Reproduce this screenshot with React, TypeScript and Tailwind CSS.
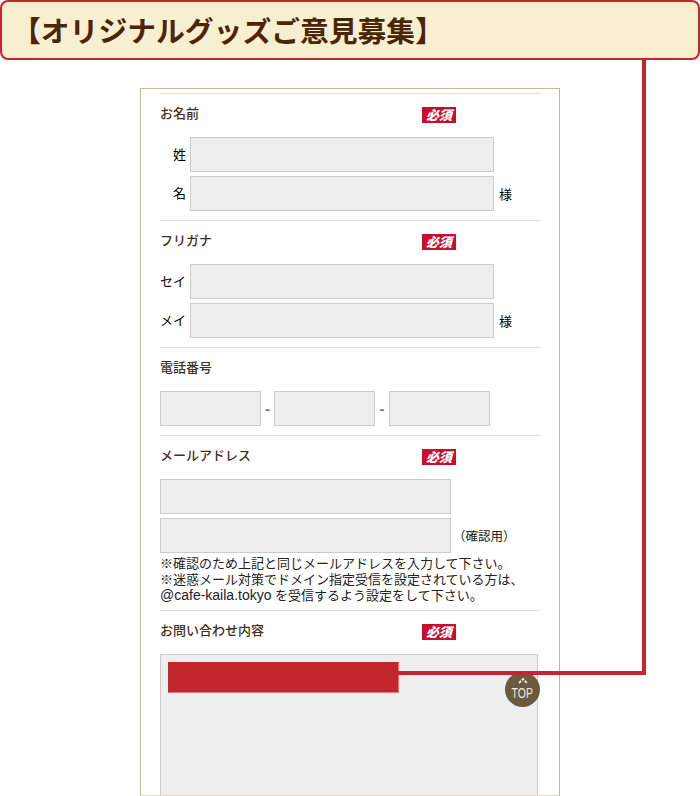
const sans = "font-['Liberation_Sans','Noto_Sans_CJK_JP',sans-serif]";

function Badge() {
  return (
    <span className="flex h-4 w-[34px] items-center justify-center bg-[#c8102e] text-[13px] leading-none font-black text-white italic">
      必須
    </span>
  );
}

function Heading({ label, required }: { label: string; required?: boolean }) {
  return (
    <div className="mb-[5px] flex h-[38px] items-center">
      <div className="w-[262px] text-[13px] leading-none font-medium text-[#3f3124]">{label}</div>
      {required && <div className="mt-1"><Badge /></div>}
    </div>
  );
}

function Field({ className }: { className: string }) {
  return <div className={`h-[35px] border border-[#cccccc] bg-[#eeeeee] ${className}`} />;
}

function NameRow({ label, suffix, right }: { label: string; suffix?: boolean; right?: boolean }) {
  return (
    <div className="flex items-center">
      <div className={`w-[30px] pr-1 text-[13px] leading-none text-black ${right ? "text-right" : ""}`}>{label}</div>
      <Field className="w-[304px]" />
      {suffix && <div className="mt-[2px] ml-[5px] text-[13px] leading-none text-black">様</div>}
    </div>
  );
}

function NameSection({ title, a, b, right }: { title: string; a: string; b: string; right?: boolean }) {
  return (
    <section className="border-t border-[#dddddd] pb-[9px]">
      <Heading label={title} required />
      <div className="flex flex-col gap-1">
        <NameRow label={a} right={right} />
        <NameRow label={b} right={right} suffix />
      </div>
    </section>
  );
}

function Dash({ className }: { className: string }) {
  return <div className={`text-center text-[15px] leading-none font-bold text-[#777777] ${className}`}>-</div>;
}

export default function App() {
  return (
    <div className={`relative h-[796px] w-[700px] overflow-hidden bg-white ${sans}`}>
      <header className="flex h-[60px] items-center rounded-lg border-2 border-[#c4262e] bg-[#f8efd0] pt-1 pl-[10px]">
        <h1 className="text-[28.8px] leading-none font-bold text-[#4a2608]">【オリジナルグッズご意見募集】</h1>
      </header>

      <main className="mx-[140px] mt-7 h-[708px] overflow-hidden border border-[#c4b894] border-b-[#e3dcc8] px-[19px] pt-1">
        <NameSection title="お名前" a="姓" b="名" right />
        <NameSection title="フリガナ" a="セイ" b="メイ" />

        <section className="border-t border-[#dddddd] pb-[9px]">
          <Heading label="電話番号" />
          <div className="flex items-center">
            <Field className="w-[101px]" />
            <Dash className="w-[13px]" />
            <Field className="w-[101px]" />
            <Dash className="w-[14px]" />
            <Field className="w-[101px]" />
          </div>
        </section>

        <section className="border-t border-[#dddddd] pb-[6px]">
          <Heading label="メールアドレス" required />
          <div className="flex flex-col gap-1">
            <Field className="w-[291px]" />
            <div className="flex items-center">
              <Field className="w-[291px]" />
              <div className="mt-1 ml-[2px] text-[12.5px] leading-none text-[#222222]">（確認用）</div>
            </div>
          </div>
          <p className="mt-[3px] text-[13px] leading-4 whitespace-nowrap text-[#222222]">
            ※確認のため上記と同じメールアドレスを入力して下さい。
            <br />
            ※迷惑メール対策でドメイン指定受信を設定されている方は、
            <br />
            <span className="text-[14px] leading-none">@cafe-kaila.tokyo</span> を受信するよう設定をして下さい。
          </p>
        </section>

        <section className="border-t border-[#dddddd]">
          <Heading label="お問い合わせ内容" required />
          <div className="h-[160px] w-[378px] border border-[#cccccc] bg-[#eeeeee] p-[7px]">
            <div className="h-[31px] w-[231px] border border-[#dc7e80] border-t-[#c4262e] border-l-[#c4262e] bg-[#c4262e]" />
          </div>
        </section>
      </main>

      <div className="absolute top-[672px] left-[505px] flex h-[35px] w-[35px] flex-col items-center rounded-full bg-[#6b5a3e] text-[#efe9df]">
        <svg width="12" height="7" viewBox="0 0 12 7" className="mt-[5px]" fill="none" stroke="#f4efe6" strokeWidth="1.8">
          <path d="M2 6 6 2l4 4" strokeDasharray="3 1" />
        </svg>
        <span className="mt-[2px] scale-x-75 text-[14px] leading-[14px]">TOP</span>
      </div>

      <div className="absolute top-[60px] left-[642px] h-[615px] w-1 bg-[#c4262e]" />
      <div className="absolute top-[671px] left-[398px] h-1 w-[248px] bg-[#c4262e]" />
    </div>
  );
}
